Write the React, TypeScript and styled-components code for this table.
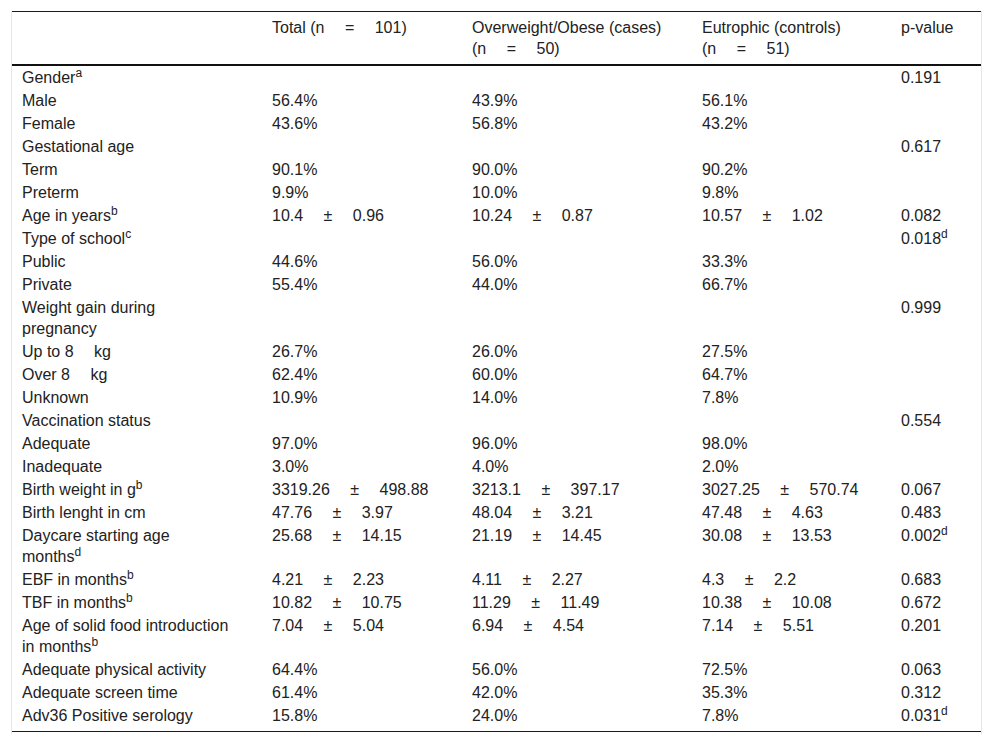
import React from "react";
import styled, { createGlobalStyle } from "styled-components";

const GlobalStyle = createGlobalStyle`
  html, body {
    margin: 0;
    padding: 0;
    background: #ffffff;
  }
  body {
    font-family: "Liberation Sans", Arial, sans-serif;
    color: #222222;
  }
`;

const Wrapper = styled.div`
  box-sizing: border-box;
  width: 971px;
  margin: 11px 0 0 11px;
  border-left: 1px solid #e6e6e6;
  border-right: 1px solid #e6e6e6;
  padding-bottom: 2px;
`;

const Table = styled.table`
  width: 969px;
  table-layout: fixed;
  border-collapse: collapse;
  border-top: 1px solid #1a1a1a;
  border-bottom: 1px solid #1a1a1a;
  font-size: 16px;
  line-height: 21px;
`;

const HeadCell = styled.th`
  text-align: left;
  vertical-align: top;
  font-weight: normal;
  padding: 5px 10px 5px 10px;
  height: 42px;
  border-bottom: 2px solid #111;
`;

const Cell = styled.td<{ $last?: boolean }>`
  text-align: left;
  vertical-align: top;
  padding: 1px 10px ${(p) => (p.$last ? "5px" : "1px")} 10px;
`;

const Sup = styled.sup`
  font-size: 12px;
  line-height: 0;
  vertical-align: 6px;
`;

const Gap = "\u2003 ";

type Row = {
  label: React.ReactNode;
  total?: string;
  cases?: string;
  controls?: string;
  p?: React.ReactNode;
};

const pm = (a: string, b: string) => `${a}${Gap}±${Gap}${b}`;

const rows: Row[] = [
  { label: <>Gender<Sup>a</Sup></>, p: "0.191" },
  { label: "Male", total: "56.4%", cases: "43.9%", controls: "56.1%" },
  { label: "Female", total: "43.6%", cases: "56.8%", controls: "43.2%" },
  { label: "Gestational age", p: "0.617" },
  { label: "Term", total: "90.1%", cases: "90.0%", controls: "90.2%" },
  { label: "Preterm", total: "9.9%", cases: "10.0%", controls: "9.8%" },
  {
    label: <>Age in years<Sup>b</Sup></>,
    total: pm("10.4", "0.96"),
    cases: pm("10.24", "0.87"),
    controls: pm("10.57", "1.02"),
    p: "0.082",
  },
  { label: <>Type of school<Sup>c</Sup></>, p: <>0.018<Sup>d</Sup></> },
  { label: "Public", total: "44.6%", cases: "56.0%", controls: "33.3%" },
  { label: "Private", total: "55.4%", cases: "44.0%", controls: "66.7%" },
  { label: <>Weight gain during<br />pregnancy</>, p: "0.999" },
  { label: `Up to 8${Gap}kg`, total: "26.7%", cases: "26.0%", controls: "27.5%" },
  { label: `Over 8${Gap}kg`, total: "62.4%", cases: "60.0%", controls: "64.7%" },
  { label: "Unknown", total: "10.9%", cases: "14.0%", controls: "7.8%" },
  { label: "Vaccination status", p: "0.554" },
  { label: "Adequate", total: "97.0%", cases: "96.0%", controls: "98.0%" },
  { label: "Inadequate", total: "3.0%", cases: "4.0%", controls: "2.0%" },
  {
    label: <>Birth weight in g<Sup>b</Sup></>,
    total: pm("3319.26", "498.88"),
    cases: pm("3213.1", "397.17"),
    controls: pm("3027.25", "570.74"),
    p: "0.067",
  },
  {
    label: "Birth lenght in cm",
    total: pm("47.76", "3.97"),
    cases: pm("48.04", "3.21"),
    controls: pm("47.48", "4.63"),
    p: "0.483",
  },
  {
    label: <>Daycare starting age<br />months<Sup>d</Sup></>,
    total: pm("25.68", "14.15"),
    cases: pm("21.19", "14.45"),
    controls: pm("30.08", "13.53"),
    p: <>0.002<Sup>d</Sup></>,
  },
  {
    label: <>EBF in months<Sup>b</Sup></>,
    total: pm("4.21", "2.23"),
    cases: pm("4.11", "2.27"),
    controls: pm("4.3", "2.2"),
    p: "0.683",
  },
  {
    label: <>TBF in months<Sup>b</Sup></>,
    total: pm("10.82", "10.75"),
    cases: pm("11.29", "11.49"),
    controls: pm("10.38", "10.08"),
    p: "0.672",
  },
  {
    label: <>Age of solid food introduction<br />in months<Sup>b</Sup></>,
    total: pm("7.04", "5.04"),
    cases: pm("6.94", "4.54"),
    controls: pm("7.14", "5.51"),
    p: "0.201",
  },
  { label: "Adequate physical activity", total: "64.4%", cases: "56.0%", controls: "72.5%", p: "0.063" },
  { label: "Adequate screen time", total: "61.4%", cases: "42.0%", controls: "35.3%", p: "0.312" },
  { label: "Adv36 Positive serology", total: "15.8%", cases: "24.0%", controls: "7.8%", p: <>0.031<Sup>d</Sup></> },
];

export default function App() {
  return (
    <>
      <GlobalStyle />
      <Wrapper>
        <Table>
          <colgroup>
            <col style={{ width: 250 }} />
            <col style={{ width: 200 }} />
            <col style={{ width: 230 }} />
            <col style={{ width: 199 }} />
            <col style={{ width: 90 }} />
          </colgroup>
          <thead>
            <tr>
              <HeadCell />
              <HeadCell>Total (n{Gap}={Gap}101)</HeadCell>
              <HeadCell>
                Overweight/Obese (cases)
                <br />
                (n{Gap}={Gap}50)
              </HeadCell>
              <HeadCell>
                Eutrophic (controls)
                <br />
                (n{Gap}={Gap}51)
              </HeadCell>
              <HeadCell>p-value</HeadCell>
            </tr>
          </thead>
          <tbody>
            {rows.map((r, i) => {
              const last = i === rows.length - 1;
              return (
                <tr key={i}>
                  <Cell $last={last}>{r.label}</Cell>
                  <Cell $last={last}>{r.total}</Cell>
                  <Cell $last={last}>{r.cases}</Cell>
                  <Cell $last={last}>{r.controls}</Cell>
                  <Cell $last={last}>{r.p}</Cell>
                </tr>
              );
            })}
          </tbody>
        </Table>
      </Wrapper>
    </>
  );
}
